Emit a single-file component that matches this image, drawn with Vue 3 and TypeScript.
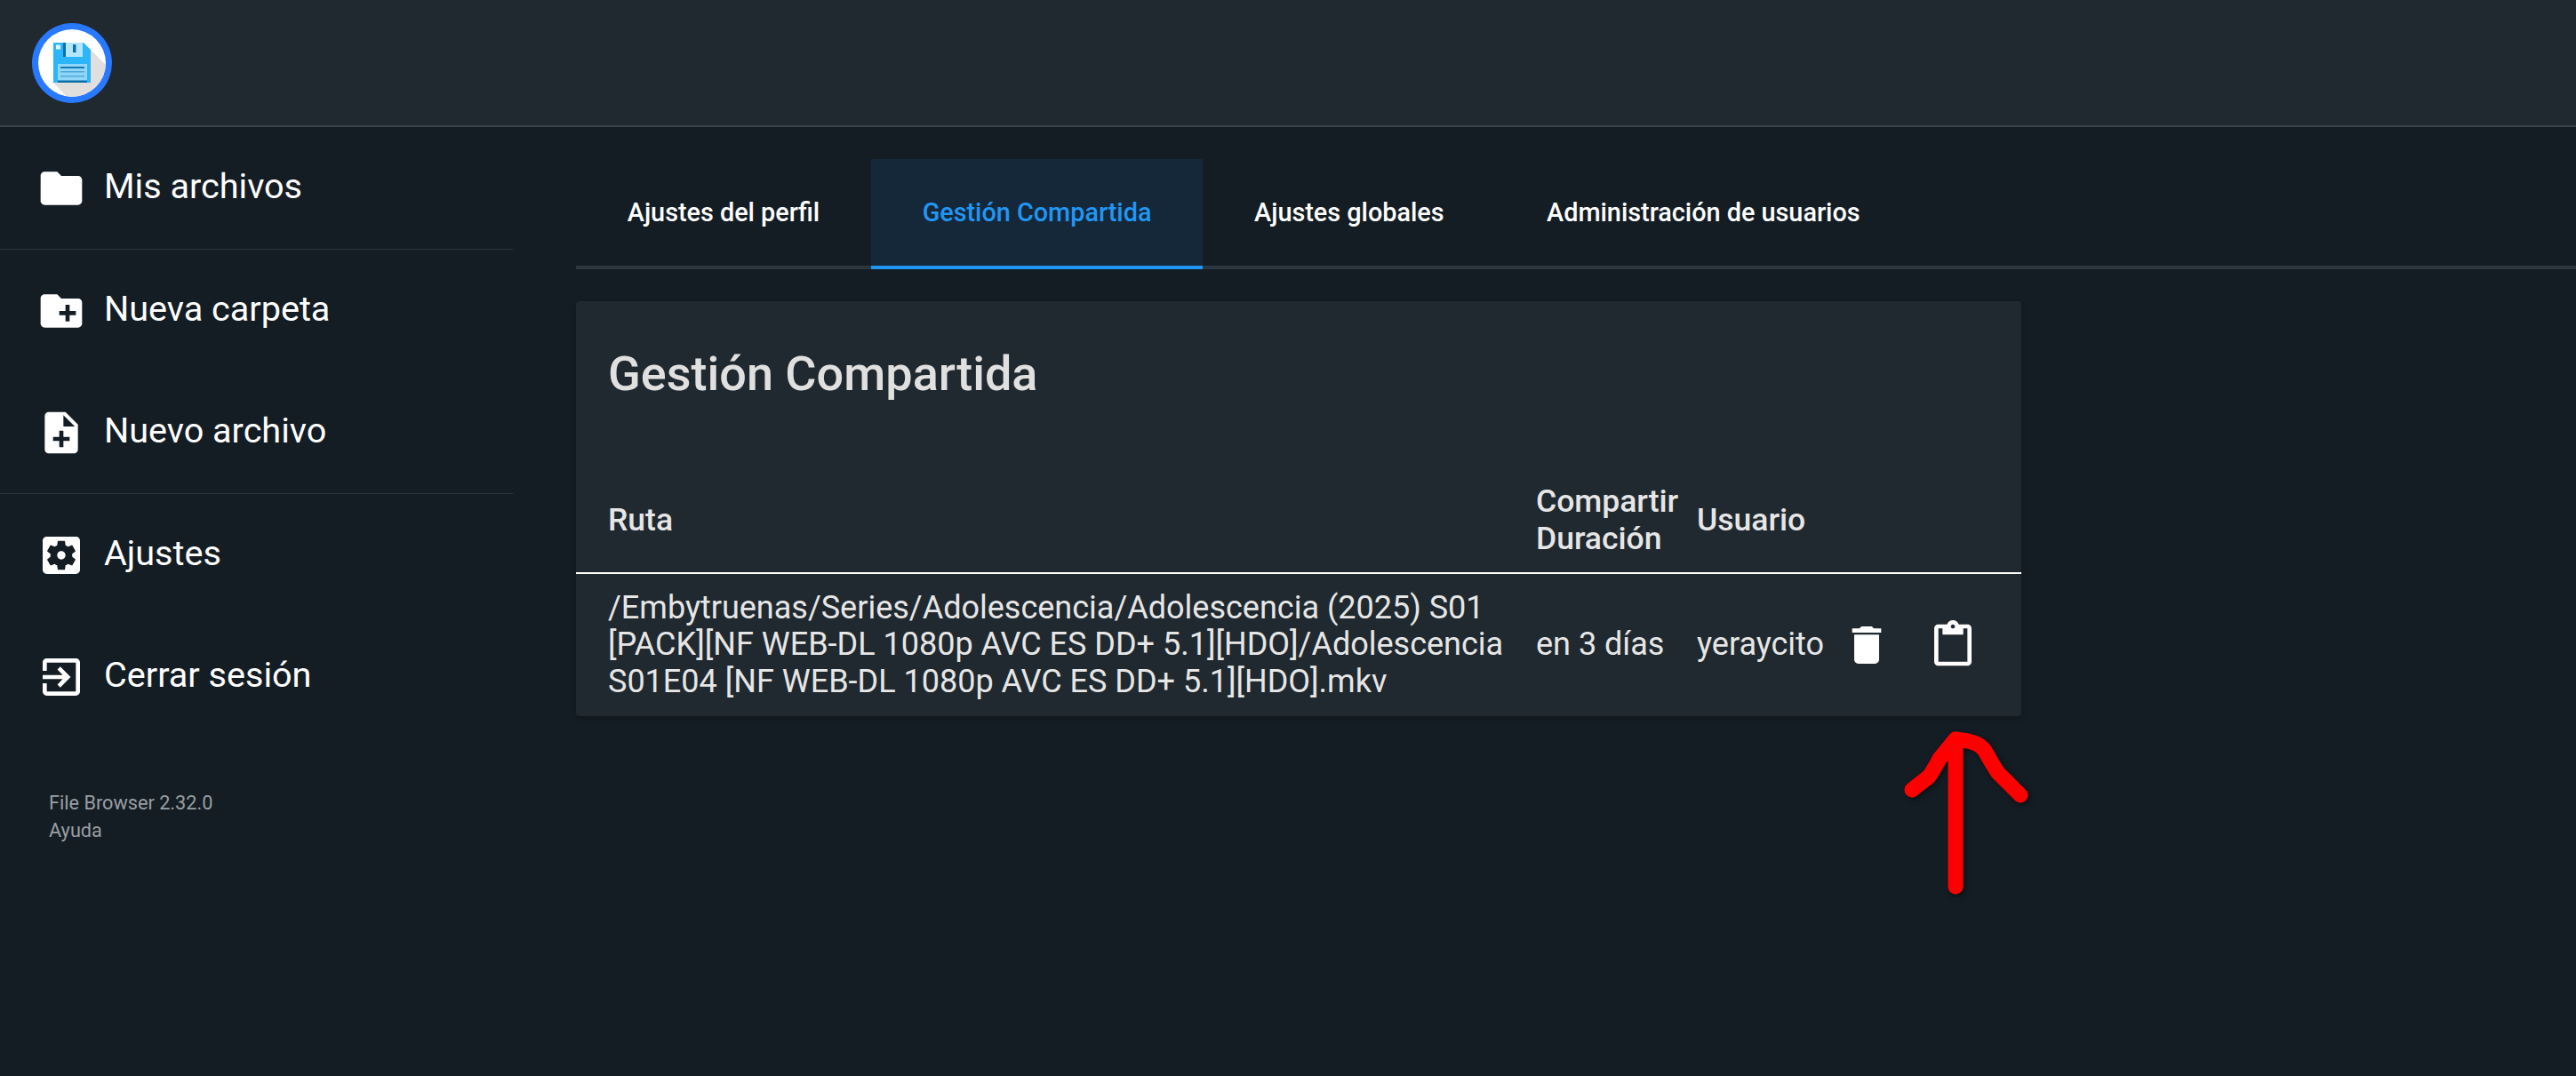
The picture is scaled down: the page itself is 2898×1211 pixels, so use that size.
<script setup lang="ts">
const topNav = [
  { label: 'Nueva carpeta', icon: 'M20 6h-8l-2-2H4c-1.11 0-1.99.89-1.99 2L2 18c0 1.11.89 2 2 2h16c1.11 0 2-.89 2-2V8c0-1.11-.89-2-2-2zm-1 8h-3v3h-2v-3h-3v-2h3V9h2v3h3v2z' },
  { label: 'Nuevo archivo', icon: 'M14 2H6c-1.1 0-1.99.9-1.99 2L4 20c0 1.1.89 2 1.99 2H18c1.1 0 2-.9 2-2V8l-6-6zm2 14h-3v3h-2v-3H8v-2h3v-3h2v3h3v2zm-3-7V3.5L18.5 9H13z' },
]
const bottomNav = [
  { label: 'Ajustes', icon: 'M12 10c-1.1 0-2 .9-2 2s.9 2 2 2 2-.9 2-2-.9-2-2-2zm7-7H5c-1.11 0-2 .9-2 2v14c0 1.1.89 2 2 2h14c1.11 0 2-.9 2-2V5c0-1.1-.89-2-2-2zm-1.75 9c0 .23-.02.46-.05.68l1.48 1.16c.13.11.17.3.08.45l-1.4 2.42c-.09.15-.27.21-.43.15l-1.74-.7c-.36.28-.76.51-1.18.69l-.26 1.85c-.03.17-.18.3-.35.3h-2.8c-.17 0-.32-.13-.35-.29l-.26-1.85c-.43-.18-.82-.41-1.18-.69l-1.74.7c-.16.06-.34 0-.43-.15l-1.4-2.42c-.09-.15-.05-.34.08-.45l1.48-1.16c-.03-.23-.05-.46-.05-.69 0-.23.02-.46.05-.68l-1.48-1.16c-.13-.11-.17-.3-.08-.45l1.4-2.42c.09-.15.27-.21.43-.15l1.74.7c.36-.28.76-.51 1.18-.69l.26-1.85c.03-.17.18-.3.35-.3h2.8c.17 0 .32.13.35.29l.26 1.85c.43.18.82.41 1.18.69l1.74-.7c.16-.06.34 0 .43.15l1.4 2.42c.09.15.05.34-.08.45l-1.48 1.16c.03.23.05.46.05.69z' },
  { label: 'Cerrar sesión', icon: 'M10.09 15.59L11.5 17l5-5-5-5-1.41 1.41L12.67 11H3v2h9.67l-2.58 2.59zM19 3H5c-1.11 0-2 .9-2 2v4h2V5h14v14H5v-4H3v4c0 1.1.89 2 2 2h14c1.1 0 2-.9 2-2V5c0-1.1-.9-2-2-2z' },
]
const folderIcon = 'M10 4H4c-1.1 0-1.99.9-1.99 2L2 18c0 1.1.9 2 2 2h16c1.1 0 2-.9 2-2V8c0-1.1-.9-2-2-2h-8l-2-2z'
const tabs = [
  { label: 'Ajustes del perfil', active: false },
  { label: 'Gestión Compartida', active: true },
  { label: 'Ajustes globales', active: false },
  { label: 'Administración de usuarios', active: false },
]
</script>

<template>
  <div class="page">
    <header class="topbar">
      <svg class="logo" viewBox="0 0 90 90" aria-label="File Browser">
        <defs>
          <clipPath id="logo-disc"><circle cx="45" cy="45" r="38" /></clipPath>
        </defs>
        <circle cx="45" cy="45" r="45" fill="#2979ff" />
        <circle cx="45" cy="45" r="38" fill="#ffffff" />
        <polygon clip-path="url(#logo-disc)" points="58,22 92,56 92,92 48,92 24,67 66,30" fill="#e0dfdd" />
        <polygon points="24,22 58,22 66,30 66,67 24,67" fill="#2cb5f9" />
        <rect x="35" y="22" width="22" height="16" fill="#b3e5fc" />
        <rect x="35" y="22" width="3" height="16" fill="#0d6fa8" />
        <rect x="46" y="24" width="3.5" height="9" fill="#0d6fa8" />
        <rect x="27" y="24.500" width="5" height="5" fill="#e1f5fe" />
        <rect x="29" y="46" width="33" height="21" fill="#90d6f9" />
        <rect x="32" y="49" width="27" height="2" fill="#1679b3" />
        <rect x="32" y="54" width="27" height="1.500" fill="#4fa8d8" />
        <rect x="32" y="59" width="27" height="1.500" fill="#4fa8d8" />
        <rect x="29" y="64.500" width="33" height="2.500" fill="#0d6fa8" />
      </svg>
    </header>

    <div class="body">
      <nav class="sidebar">
        <a class="nav-item">
          <svg class="nav-icon" viewBox="0 0 24 24"><path :d="folderIcon" /></svg>
          <span class="nav-label">Mis archivos</span>
        </a>
        <div class="nav-group">
          <a v-for="item in topNav" :key="item.label" class="nav-item">
            <svg class="nav-icon" viewBox="0 0 24 24"><path :d="item.icon" /></svg>
            <span class="nav-label">{{ item.label }}</span>
          </a>
        </div>
        <div class="nav-group">
          <a v-for="item in bottomNav" :key="item.label" class="nav-item">
            <svg class="nav-icon" viewBox="0 0 24 24"><path :d="item.icon" /></svg>
            <span class="nav-label">{{ item.label }}</span>
          </a>
        </div>
        <p class="credits">
          <span>File Browser 2.32.0</span>
          <span>Ayuda</span>
        </p>
      </nav>

      <main class="content">
        <div class="tabs">
          <a v-for="tab in tabs" :key="tab.label" class="tab" :class="{ active: tab.active }">{{ tab.label }}</a>
        </div>

        <section class="card">
          <h2 class="card-title">Gestión Compartida</h2>
          <table class="shares">
            <colgroup>
              <col class="col-path" />
              <col class="col-expire" />
              <col class="col-user" />
              <col />
            </colgroup>
            <thead>
              <tr>
                <th>Ruta</th>
                <th>Compartir Duración</th>
                <th>Usuario</th>
                <th></th>
              </tr>
            </thead>
            <tbody>
              <tr>
                <td>/Embytruenas/Series/Adolescencia/Adolescencia (2025) S01 [PACK][NF WEB-DL 1080p AVC ES DD+ 5.1][HDO]/Adolescencia S01E04 [NF WEB-DL 1080p AVC ES DD+ 5.1][HDO].mkv</td>
                <td>en 3 días</td>
                <td>yeraycito</td>
                <td>
                  <div class="actions">
                    <svg class="action-icon" viewBox="0 0 24 24"><path d="M6 19c0 1.1.9 2 2 2h8c1.1 0 2-.9 2-2V7H6v12zM19 4h-3.5l-1-1h-5l-1 1H5v2h14V4z" /></svg>
                    <svg class="action-icon" viewBox="0 0 24 24"><path d="M19 2h-4.18C14.4.84 13.3 0 12 0c-1.3 0-2.4.84-2.82 2H5c-1.1 0-2 .9-2 2v16c0 1.1.9 2 2 2h14c1.1 0 2-.9 2-2V4c0-1.1-.9-2-2-2zm-7 0c.55 0 1 .45 1 1s-.45 1-1 1-1-.45-1-1 .45-1 1-1zm7 18H5V4h2v3h10V4h2v16z" /></svg>
                  </div>
                </td>
              </tr>
            </tbody>
          </table>
        </section>
      </main>
    </div>

    <svg class="arrow" viewBox="0 0 150 190" aria-hidden="true">
      <path d="M58 181V15" />
      <path d="M9 72L28 57C33 50 36 44 40 37L58 15L72 17C80 19 86 21 91 28C96 37 101 46 106 53L131 78" />
    </svg>
  </div>
</template>

<style scoped>
.page {
  position: relative;
  min-height: 100vh;
  background: #141d24;
  color: #ffffff;
  font-family: Roboto, "Liberation Sans", sans-serif;
  overflow: hidden;
}
.topbar {
  box-sizing: content-box;
  height: 115px;
  padding: 26px 36px 0;
  background: #20292f;
  border-bottom: 2px solid #3a4249;
}
.logo {
  display: block;
  width: 90px;
  height: 90px;
}
.body {
  display: flex;
}
.sidebar {
  width: 577px;
  flex: none;
}
.nav-item {
  display: flex;
  align-items: center;
  height: 137px;
  padding-left: 41px;
  font-size: 39.600px;
  color: #ffffff;
}
.nav-label {
  padding-bottom: 4px;
}
.nav-icon {
  width: 56px;
  height: 56px;
  margin-right: 20px;
  fill: #ffffff;
  flex: none;
}
.nav-group {
  border-top: 1px solid #2c353c;
}
.credits {
  display: flex;
  flex-direction: column;
  margin: 58px 0 0;
  padding-left: 55px;
  font-size: 21.700px;
  line-height: 31px;
  color: #9a9fa3;
}
.content {
  flex: 1;
  padding: 36px 0 0 71px;
  min-width: 0;
}
.tabs {
  display: flex;
  border-bottom: 4px solid #2d3740;
}
.tab {
  padding: 0 57.800px;
  height: 120px;
  line-height: 120px;
  margin-bottom: -4px;
  box-sizing: content-box;
  border-bottom: 4px solid transparent;
  font-size: 28.800px;
  font-weight: 500;
  color: #ffffff;
  white-space: nowrap;
}
.tab.active {
  color: #2196f3;
  background: #15283a;
  border-bottom-color: #2196f3;
}
.card {
  width: 1626px;
  margin-top: 36px;
  background: #20292f;
  border-radius: 4px;
  box-shadow: 0 2px 6px rgba(0, 0, 0, 0.2);
}
.card-title {
  margin: 0;
  height: 191px;
  box-sizing: border-box;
  padding: 50px 36px 0;
  font-size: 54px;
  line-height: 64px;
  font-weight: 500;
  color: #e0e0e0;
}
.shares {
  width: 100%;
  table-layout: fixed;
  border-collapse: collapse;
  font-size: 36px;
  line-height: 41.500px;
  color: #e6e6e6;
}
.col-path { width: 1060px; }
.col-expire { width: 181px; }
.col-user { width: 175px; }
th, td {
  padding: 0 0 0 20px;
  text-align: left;
  vertical-align: middle;
}
th:first-child, td:first-child {
  padding-left: 36px;
}
th {
  height: 115px;
  padding-bottom: 3px;
  box-sizing: border-box;
  font-size: 35.500px;
  font-weight: 500;
  border-bottom: 2px solid #ffffff;
}
td {
  height: 160px;
}
.actions {
  display: flex;
  gap: 41px;
  margin-left: -12px;
}
.action-icon {
  width: 56px;
  height: 56px;
  fill: #ffffff;
  flex: none;
}
.arrow {
  position: absolute;
  left: 2142px;
  top: 817px;
  width: 150px;
  height: 190px;
  filter: drop-shadow(2px 2px 3px rgba(0, 0, 0, 0.5));
}
.arrow path {
  fill: none;
  stroke: #ff0000;
  stroke-width: 17px;
  stroke-linecap: round;
  stroke-linejoin: round;
}
</style>

<style>
html, body {
  background: #141d24;
}
</style>
